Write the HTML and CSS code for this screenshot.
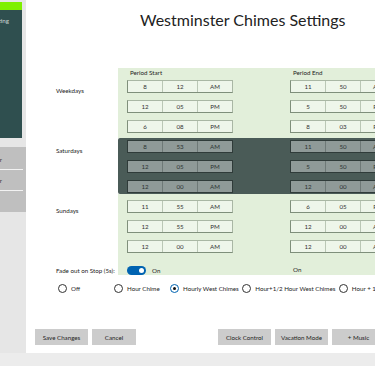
FILE: index.html
```html
<!DOCTYPE html>
<html lang="en">
<head>
    <meta charset="UTF-8">
    <meta name="viewport" content="width=device-width, initial-scale=1.0">
    <title>Westminster Chimes Settings</title>
    <link rel="stylesheet" href="styles.css">
</head>
<body>
    <div class="window">
        <aside class="sidebar">
            <div class="accent"></div>
            <div class="nav-dark">
                <div class="nav-title">Westminster Chimes Setting</div>
            </div>
            <div class="nav-group">
                <div class="nav-item"><span>Clock Timer</span></div>
                <div class="nav-item"><span>Chime Player</span></div>
                <div class="nav-item nav-last"></div>
            </div>
        </aside>

        <main class="main">
            <h1 class="title">Westminster Chimes Settings</h1>

            <div class="schedule">
                <div></div>
                <div class="panel-head">
                    <div class="head-text">Period Start</div>
                    <div class="head-text">Period End</div>
                </div>

                <div class="label">Weekdays</div>
                <div class="times">
                    <div class="time"><span>8</span><span>12</span><span>AM</span></div>
                    <div class="time"><span>11</span><span>50</span><span>AM</span></div>
                    <div class="time"><span>12</span><span>05</span><span>PM</span></div>
                    <div class="time"><span>5</span><span>50</span><span>PM</span></div>
                    <div class="time"><span>6</span><span>08</span><span>PM</span></div>
                    <div class="time"><span>8</span><span>03</span><span>PM</span></div>
                </div>

                <div class="label">Saturdays</div>
                <div class="times times-dark">
                    <div class="time"><span>8</span><span>53</span><span>AM</span></div>
                    <div class="time"><span>11</span><span>50</span><span>AM</span></div>
                    <div class="time"><span>12</span><span>05</span><span>PM</span></div>
                    <div class="time"><span>5</span><span>50</span><span>PM</span></div>
                    <div class="time"><span>12</span><span>00</span><span>AM</span></div>
                    <div class="time"><span>12</span><span>00</span><span>AM</span></div>
                </div>

                <div class="label label-late">Sundays</div>
                <div class="times times-late">
                    <div class="time"><span>11</span><span>55</span><span>AM</span></div>
                    <div class="time"><span>6</span><span>05</span><span>PM</span></div>
                    <div class="time"><span>12</span><span>55</span><span>PM</span></div>
                    <div class="time"><span>12</span><span>00</span><span>AM</span></div>
                    <div class="time"><span>12</span><span>00</span><span>AM</span></div>
                    <div class="time"><span>12</span><span>00</span><span>AM</span></div>
                </div>

                <div class="label">Fade out on Stop (5s):</div>
                <div class="fade">
                    <div class="toggle-wrap">
                        <div class="toggle"><div class="knob"></div></div>
                        <span>On</span>
                    </div>
                    <div class="fade-end">On</div>
                </div>
            </div>

            <div class="options">
                <div class="option"><span class="radio"></span>Off</div>
                <div class="option"><span class="radio"></span>Hour Chime</div>
                <div class="option"><span class="radio radio-on"><span class="dot"></span></span>Hourly West Chimes</div>
                <div class="option"><span class="radio"></span>Hour+1/2 Hour West Chimes</div>
                <div class="option"><span class="radio"></span>Hour + 1/4 Hour West Chimes</div>
            </div>

            <div class="actions">
                <button class="btn">Save Changes</button>
                <button class="btn btn-small">Cancel</button>
                <button class="btn btn-gap">Clock Control</button>
                <button class="btn">Vacation Mode</button>
                <button class="btn">+ Music</button>
            </div>
        </main>
    </div>
</body>
</html>
```

FILE: styles.css
```css
body {
    margin: 0;
    background: #ececec;
    font-family: "Segoe UI", Lato, "Noto Sans", sans-serif;
    color: #222;
}
.window {
    display: flex;
    height: 353px;
    overflow: hidden;
}

/* sidebar */
.sidebar {
    width: 26px;
    flex-shrink: 0;
    background: #e6e6e6;
}
.accent {
    width: 22px;
    height: 8px;
    margin-top: 2px;
    background: #7ff000;
}
.nav-dark {
    width: 22px;
    height: 128px;
    background: #2f4f4f;
    display: flex;
    justify-content: flex-end;
    overflow: hidden;
}
.nav-title {
    padding: 6px 13px 0 0;
    font-size: 6.2px;
    line-height: 9px;
    color: #c9d3d3;
    white-space: nowrap;
}
.nav-group {
    margin-top: 9px;
    padding-top: 2px;
    background: #bfbfbf;
}
.nav-item {
    width: 23px;
    height: 20px;
    border-bottom: 1px solid #f2f2f2;
    display: flex;
    justify-content: flex-end;
    align-items: center;
    overflow: hidden;
    font-size: 6.2px;
    color: #333;
    white-space: nowrap;
}
.nav-item span {
    padding-right: 21px;
}
.nav-last {
    height: 21px;
    border-bottom: 0;
}

/* main */
.main {
    flex: 1;
    min-width: 0;
    background: #fff;
    overflow: hidden;
}
.title {
    margin: 0;
    height: 68px;
    box-sizing: border-box;
    padding: 9px 0 0 114px;
    font-size: 16px;
    font-weight: normal;
    line-height: 22px;
    color: #222;
    white-space: nowrap;
}
.schedule {
    display: grid;
    grid-template-columns: 92px 300px;
}
.label {
    padding: 7.5px 0 0 30px;
    font-size: 6.2px;
    line-height: 9px;
    white-space: nowrap;
}
.label-late {
    padding-top: 11.5px;
}
.panel-head, .times, .fade {
    display: grid;
    grid-template-columns: 106px 106px;
    column-gap: 57px;
    padding: 0 9px;
    background: #e2efda;
}
.panel-head {
    height: 10px;
}
.head-text {
    padding-left: 3px;
    font-size: 6.2px;
    line-height: 9px;
}
.times {
    row-gap: 7px;
    padding-top: 2px;
    padding-bottom: 5px;
}
.times-dark {
    background: #4a5b57;
    padding-bottom: 1px;
    border-radius: 2px 0 0 2px;
}
.times-late {
    padding-top: 6px;
}
.time {
    display: flex;
    height: 13px;
    box-sizing: border-box;
    border: 1px solid #a9b7a4;
    border-left-color: #7f8f7b;
    border-bottom-color: #7f8f7b;
    background: #eef6ea;
}
.time span {
    flex: 1;
    text-align: center;
    font-size: 6.2px;
    line-height: 11px;
    color: #333;
    border-left: 1px solid #bac7b5;
}
.time span:first-child {
    border-left: 0;
}
.times-dark .time {
    background: #8f9a98;
    border-color: #2f3b39;
}
.times-dark .time span {
    border-left-color: #6e7977;
    color: #2c3432;
}
.fade {
    height: 17px;
    box-sizing: border-box;
    padding-top: 7px;
    font-size: 6.2px;
    line-height: 9px;
}
.toggle-wrap {
    display: flex;
    align-items: center;
    gap: 6px;
}
.toggle {
    width: 19px;
    height: 9px;
    border-radius: 5px;
    background: #0063b1;
    display: flex;
    justify-content: flex-end;
    align-items: center;
    padding-right: 2px;
    box-sizing: border-box;
}
.knob {
    width: 5px;
    height: 5px;
    border-radius: 50%;
    background: #fff;
}
.fade-end {
    padding-left: 3px;
}

/* chime type */
.options {
    display: flex;
    padding: 9px 0 0 32px;
}
.option {
    display: flex;
    align-items: center;
    gap: 4px;
    min-width: 56px;
    padding-right: 3.5px;
    box-sizing: border-box;
    flex-shrink: 0;
    font-size: 6.2px;
    line-height: 9px;
    white-space: nowrap;
}
.radio {
    width: 9px;
    height: 9px;
    border: 1px solid #333;
    border-radius: 50%;
    box-sizing: border-box;
    flex-shrink: 0;
    display: flex;
    align-items: center;
    justify-content: center;
}
.radio-on {
    border: 1.5px solid #0063b1;
}
.dot {
    width: 3px;
    height: 3px;
    border-radius: 50%;
    background: #111;
}

/* buttons */
.actions {
    display: flex;
    gap: 4px;
    padding: 36px 0 0 9px;
}
.btn {
    width: 53px;
    height: 16px;
    flex-shrink: 0;
    padding: 0;
    border: 0;
    background: #ccc;
    font-family: inherit;
    font-size: 6.2px;
    color: #222;
}
.btn-small {
    width: 44px;
}
.btn-gap {
    margin-left: 78px;
}
```
